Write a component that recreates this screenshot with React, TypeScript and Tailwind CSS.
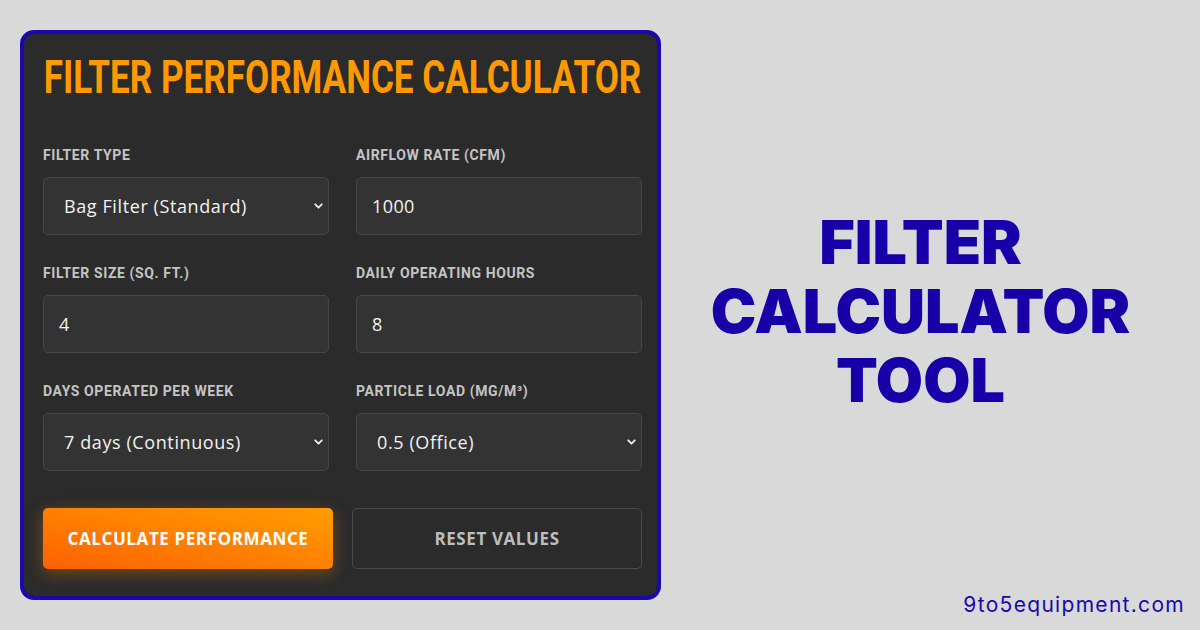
import { ChevronDown } from "lucide-react";

function Field({ label, value, select }: { label: string; value: string; select?: boolean }) {
  return (
    <div className="flex flex-col">
      <label className="font-[Roboto] text-[14px] leading-5 font-bold tracking-[0.6px] text-[#c4c4c4] uppercase mb-3">
        {label}
      </label>
      {select ? (
        <div className="relative">
          <select
            defaultValue={value}
            className="appearance-none w-full h-[58px] bg-[#333333] border border-[#464646] rounded-[5px] pl-5 pr-8 text-[18px] tracking-[0.6px] text-[#f2f2f2] font-['Open_Sans'] outline-none"
          >
            <option>{value}</option>
          </select>
          <ChevronDown
            size={13}
            strokeWidth={3.5}
            className="absolute right-[4px] top-1/2 -translate-y-1/2 text-[#e8e8e8] pointer-events-none"
          />
        </div>
      ) : (
        <input
          type="text"
          defaultValue={value}
          className="w-full h-[58px] bg-[#333333] border border-[#464646] rounded-[5px] px-[15px] text-[18px] tracking-[0.4px] text-[#f2f2f2] font-['Open_Sans'] outline-none"
        />
      )}
    </div>
  );
}

export default function App() {
  return (
    <div className="w-[1200px] h-[630px] bg-[#d9d9d9] flex pl-5 pt-[30px] overflow-hidden">
      {/* Calculator card */}
      <div className="w-[641px] h-[570px] border-4 border-[#1a08ac] rounded-[14px] bg-[#2b2b2b] pl-[19px] pr-[15px] pt-[19px]">
        <div className="flex justify-center">
          <h1 className="font-[Roboto] text-[47px] leading-[47px] font-bold text-[#ff9900] whitespace-nowrap scale-x-[0.746] origin-center">
            FILTER PERFORMANCE CALCULATOR
          </h1>
        </div>

        <div className="grid grid-cols-2 gap-x-[27px] gap-y-7 mt-[45px]">
          <Field label="Filter Type" value="Bag Filter (Standard)" select />
          <Field label="Airflow Rate (CFM)" value="1000" />
          <Field label="Filter Size (sq. ft.)" value="4" />
          <Field label="Daily Operating Hours" value="8" />
          <Field label="Days Operated Per Week" value="7 days (Continuous)" select />
          <Field label="Particle Load (mg/m³)" value="0.5 (Office)" select />
        </div>

        <div className="flex gap-[19px] mt-[37px]">
          <button className="w-[290px] h-[61px] rounded-[5px] bg-linear-to-tr from-[#ff6000] to-[#ff9d00] shadow-[0_4px_16px_rgba(255,140,0,0.35)] text-white font-['Open_Sans'] font-bold text-[17px] tracking-[0.6px]">
            CALCULATE PERFORMANCE
          </button>
          <button className="flex-1 h-[61px] rounded-[5px] border border-[#4a4a4a] text-[#bdbdbd] font-['Open_Sans'] font-bold text-[17px] tracking-[0.6px]">
            RESET VALUES
          </button>
        </div>
      </div>

      {/* Right side title */}
      <div className="flex-1 flex flex-col pt-[4px]">
        <div className="flex-1 flex items-center justify-center pr-5">
          <h2 className="font-[Inter] font-black text-[61px] leading-[69px] text-[#1800a8] text-center">
            FILTER
            <br />
            CALCULATOR
            <br />
            TOOL
          </h2>
        </div>
        <div className="self-end pr-[15px] pb-[10px] font-[Inter] text-[21px] tracking-[1.3px] text-[#1a08ac]">
          9to5equipment.com
        </div>
      </div>
    </div>
  );
}
